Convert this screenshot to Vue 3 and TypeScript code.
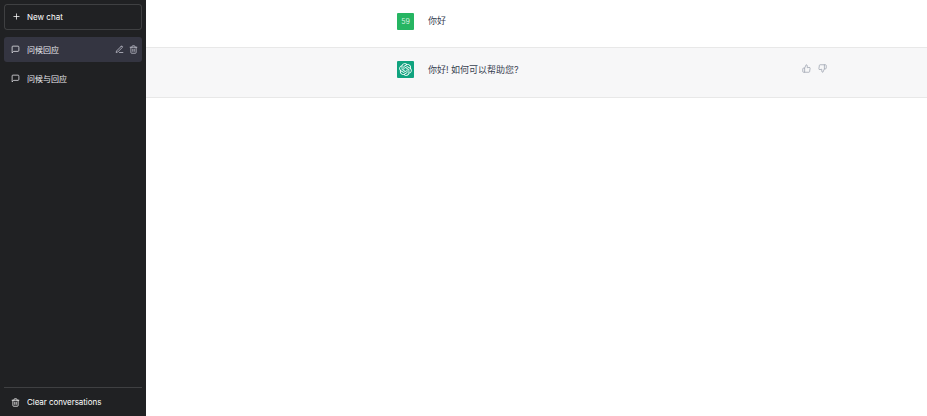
<script setup lang="ts">
const conversations = [
  { id: 1, title: '问候回应', active: true },
  { id: 2, title: '问候与回应', active: false },
];

const openaiPath =
  'M37.5324 16.8707C37.9808 15.5241 38.1363 14.0974 37.9886 12.6859C37.8409 11.2744 37.3934 9.91076 36.676 8.68622C35.6126 6.83404 33.9882 5.3676 32.0373 4.4985C30.0864 3.62941 27.9098 3.40259 25.8215 3.85078C24.8796 2.7893 23.7219 1.94125 22.4257 1.36341C21.1295 0.785575 19.7249 0.491269 18.3058 0.500197C16.1708 0.495044 14.0893 1.16803 12.3614 2.42214C10.6335 3.67624 9.34853 5.44666 8.6917 7.47815C7.30085 7.76286 5.98686 8.3414 4.8377 9.17505C3.68854 10.0087 2.73073 11.0782 2.02839 12.312C0.956464 14.1591 0.498905 16.2988 0.721698 18.4228C0.944492 20.5467 1.83612 22.5449 3.268 24.1293C2.81966 25.4759 2.66413 26.9026 2.81182 28.3141C2.95951 29.7256 3.40701 31.0892 4.12437 32.3138C5.18791 34.1659 6.8123 35.6322 8.76321 36.5013C10.7141 37.3704 12.8907 37.5973 14.9789 37.1492C15.9208 38.2107 17.0786 39.0587 18.3747 39.6366C19.6709 40.2144 21.0755 40.5087 22.4946 40.4998C24.6307 40.5054 26.7133 39.8321 28.4418 38.5772C30.1704 37.3223 31.4556 35.5506 32.1119 33.5179C33.5027 33.2332 34.8167 32.6547 35.9659 31.821C37.115 30.9874 38.0728 29.9178 38.7752 28.684C39.8458 26.8371 40.3023 24.6979 40.0789 22.5748C39.8556 20.4517 38.9639 18.4544 37.5324 16.8707ZM22.4978 37.8849C20.7443 37.8874 19.0459 37.2733 17.6994 36.1501C17.7601 36.117 17.8666 36.0586 17.936 36.0161L25.9004 31.4156C26.1003 31.3019 26.2663 31.137 26.3813 30.9378C26.4964 30.7386 26.5563 30.5124 26.5549 30.2825V19.0542L29.9213 20.998C29.9389 21.0068 29.9541 21.0198 29.9656 21.0359C29.977 21.052 29.9842 21.0707 29.9867 21.0902V30.3889C29.9842 32.375 29.1946 34.2791 27.7909 35.6841C26.3872 37.0892 24.4838 37.8806 22.4978 37.8849ZM6.39227 31.0064C5.51397 29.4888 5.19742 27.7107 5.49804 25.9832C5.55718 26.0187 5.66048 26.0818 5.73461 26.1244L13.699 30.7248C13.8975 30.8408 14.1233 30.902 14.3532 30.902C14.583 30.902 14.8088 30.8408 15.0073 30.7248L24.731 25.1103V28.9979C24.7321 29.0177 24.7283 29.0376 24.7199 29.0556C24.7115 29.0736 24.6988 29.0893 24.6829 29.1012L16.6317 33.7497C14.9096 34.7416 12.8643 35.0097 10.9447 34.4954C9.02506 33.9811 7.38785 32.7263 6.39227 31.0064ZM4.29707 13.6194C5.17156 12.0998 6.55279 10.9364 8.19885 10.3327C8.19885 10.4013 8.19491 10.5228 8.19491 10.6071V19.808C8.19351 20.0378 8.25334 20.2638 8.36823 20.4629C8.48312 20.6619 8.64893 20.8267 8.84863 20.9404L18.5723 26.5542L15.206 28.4979C15.1894 28.5089 15.1703 28.5155 15.1505 28.5173C15.1307 28.5191 15.1107 28.516 15.0924 28.5082L7.04046 23.8557C5.32135 22.8601 4.06716 21.2235 3.55289 19.3046C3.03862 17.3858 3.30624 15.3413 4.29707 13.6194ZM31.955 20.0556L22.2312 14.4411L25.5976 12.4981C25.6142 12.4872 25.6333 12.4805 25.6531 12.4787C25.6729 12.4769 25.6928 12.4801 25.7111 12.4879L33.7631 17.1364C34.9967 17.849 36.0017 18.8982 36.6606 20.1613C37.3194 21.4244 37.6047 22.849 37.4832 24.2684C37.3617 25.6878 36.8382 27.0432 35.9743 28.1759C35.1103 29.3086 33.9415 30.1717 32.6047 30.6641C32.6047 30.5947 32.6047 30.4733 32.6047 30.3889V21.188C32.6066 20.9586 32.5474 20.7328 32.4332 20.5338C32.319 20.3348 32.154 20.1698 31.955 20.0556ZM35.3055 15.0128C35.2464 14.9765 35.1431 14.9142 35.069 14.8717L27.1045 10.2712C26.906 10.1554 26.6803 10.0943 26.4504 10.0943C26.2206 10.0943 25.9948 10.1554 25.7963 10.2712L16.0726 15.8858V11.9982C16.0715 11.9783 16.0753 11.9585 16.0837 11.9405C16.0921 11.9225 16.1048 11.9068 16.1207 11.8949L24.1719 7.25025C25.4053 6.53903 26.8158 6.19376 28.2383 6.25482C29.6608 6.31589 31.0364 6.78077 32.2044 7.59508C33.3723 8.40939 34.2842 9.53945 34.8334 10.8531C35.3826 12.1667 35.5464 13.6095 35.3055 15.0128ZM14.2424 21.9419L10.8752 19.9981C10.8576 19.9893 10.8423 19.9763 10.8309 19.9602C10.8195 19.9441 10.8122 19.9254 10.8098 19.9058V10.6071C10.8107 9.18295 11.2173 7.78848 11.9819 6.58696C12.7466 5.38544 13.8377 4.42659 15.1275 3.82264C16.4173 3.21869 17.8524 2.99464 19.2649 3.1767C20.6775 3.35876 22.0089 3.93941 23.1034 4.85067C23.0427 4.88379 22.937 4.94215 22.8668 4.98473L14.9024 9.58517C14.7025 9.69878 14.5366 9.86356 14.4215 10.0626C14.3065 10.2616 14.2466 10.4877 14.2479 10.7175L14.2424 21.9419ZM16.071 17.9991L20.4018 15.4978L24.7325 17.9975V22.9985L20.4018 25.4983L16.071 22.9985V17.9991Z';
</script>

<template>
  <div class="page">
    <aside class="sidebar">
      <button class="new-chat">
        <svg class="icon" viewBox="0 0 24 24">
          <line x1="12" y1="5" x2="12" y2="19" />
          <line x1="5" y1="12" x2="19" y2="12" />
        </svg>
        <span>New chat</span>
      </button>

      <nav class="conversations">
        <a
          v-for="conv in conversations"
          :key="conv.id"
          class="conversation"
          :class="{ active: conv.active }"
        >
          <svg class="icon" viewBox="0 0 24 24">
            <path d="M21 15a2 2 0 0 1-2 2H7l-4 4V5a2 2 0 0 1 2-2h14a2 2 0 0 1 2 2z" />
          </svg>
          <span class="conversation-title">{{ conv.title }}</span>
          <span v-if="conv.active" class="conversation-actions">
            <svg class="icon" viewBox="0 0 24 24">
              <path d="M12 20h9" />
              <path d="M16.5 3.5a2.121 2.121 0 0 1 3 3L7 19l-4 1 1-4L16.5 3.5z" />
            </svg>
            <svg class="icon" viewBox="0 0 24 24">
              <polyline points="3 6 5 6 21 6" />
              <path d="M19 6v14a2 2 0 0 1-2 2H7a2 2 0 0 1-2-2V6m3 0V4a2 2 0 0 1 2-2h4a2 2 0 0 1 2 2v2" />
              <line x1="10" y1="11" x2="10" y2="17" />
              <line x1="14" y1="11" x2="14" y2="17" />
            </svg>
          </span>
        </a>
      </nav>

      <div class="sidebar-footer">
        <a class="clear">
          <svg class="icon" viewBox="0 0 24 24">
            <polyline points="3 6 5 6 21 6" />
            <path d="M19 6v14a2 2 0 0 1-2 2H7a2 2 0 0 1-2-2V6m3 0V4a2 2 0 0 1 2-2h4a2 2 0 0 1 2 2v2" />
            <line x1="10" y1="11" x2="10" y2="17" />
            <line x1="14" y1="11" x2="14" y2="17" />
          </svg>
          <span>Clear conversations</span>
        </a>
      </div>
    </aside>

    <main class="thread">
      <section class="message user">
        <div class="message-inner">
          <div class="avatar avatar-user">59</div>
          <p class="message-text">你好</p>
        </div>
      </section>

      <section class="message assistant">
        <div class="message-inner">
          <div class="avatar avatar-bot">
            <svg viewBox="0 0 41 41" class="logo">
              <path :d="openaiPath" fill="currentColor" />
            </svg>
          </div>
          <p class="message-text">你好! 如何可以帮助您?</p>
          <div class="feedback">
            <svg class="icon" viewBox="0 0 24 24">
              <path d="M14 9V5a3 3 0 0 0-3-3l-4 9v11h11.28a2 2 0 0 0 2-1.7l1.38-9a2 2 0 0 0-2-2.3zM7 22H4a2 2 0 0 1-2-2v-7a2 2 0 0 1 2-2h3" />
            </svg>
            <svg class="icon" viewBox="0 0 24 24">
              <path d="M10 15v4a3 3 0 0 0 3 3l4-9V2H5.72a2 2 0 0 0-2 1.7l-1.38 9a2 2 0 0 0 2 2.3zm7-13h2.67A2.31 2.31 0 0 1 22 4v7a2.31 2.31 0 0 1-2.33 2H17" />
            </svg>
          </div>
        </div>
      </section>
    </main>
  </div>
</template>

<style scoped>
.page {
  display: flex;
  height: 416px;
  overflow: hidden;
  font-family: "Inter", "Noto Sans CJK SC", sans-serif;
  background: #fff;
}

.icon {
  width: 9px;
  height: 9px;
  flex: none;
  fill: none;
  stroke: currentColor;
  stroke-width: 2;
  stroke-linecap: round;
  stroke-linejoin: round;
}

.sidebar {
  width: 146px;
  flex: none;
  display: flex;
  flex-direction: column;
  padding: 4px 4px 0;
  box-sizing: border-box;
  background: #202123;
  color: #fff;
  font-size: 8px;
}

.new-chat {
  display: flex;
  align-items: center;
  gap: 6px;
  height: 26px;
  padding: 0 7px 1px;
  border: 1px solid rgba(255, 255, 255, 0.14);
  border-radius: 3px;
  background: transparent;
  color: #fff;
  font: inherit;
  margin-bottom: 7px;
}

.conversations {
  flex: 1;
  display: flex;
  flex-direction: column;
  gap: 4px;
}

.conversation {
  display: flex;
  align-items: center;
  gap: 7px;
  height: 25px;
  padding: 0 4px 0 7px;
  border-radius: 3px;
  color: #ececf1;
}

.conversation.active {
  background: #343541;
}

.conversation-title {
  flex: 1;
}

.conversation-actions {
  display: flex;
  gap: 5px;
  color: #c5c5d2;
}

.sidebar-footer {
  border-top: 1px solid rgba(255, 255, 255, 0.14);
  padding: 5px 0;
}

.clear {
  display: flex;
  align-items: center;
  gap: 7px;
  height: 18px;
  padding: 0 7px;
  letter-spacing: -0.05px;
}

.thread {
  flex: 1;
  min-width: 0;
  color: #374151;
  font-size: 9px;
}

.message {
  border-bottom: 1px solid #e8e8e8;
  padding-left: 251px;
}

.message.user {
  height: 48px;
  box-sizing: border-box;
  padding-top: 13px;
}

.message.assistant {
  height: 50px;
  box-sizing: border-box;
  padding-top: 13px;
  background: #f7f7f8;
}

.message-inner {
  display: flex;
  align-items: flex-start;
  width: 430px;
}

.avatar {
  width: 17px;
  height: 17px;
  flex: none;
  display: flex;
  align-items: center;
  justify-content: center;
  border-radius: 1px;
  color: #fff;
}

.avatar-user {
  background: #26b562;
  font-size: 7px;
  color: #d5f2e0;
}

.avatar-bot {
  background: #10a37f;
}

.logo {
  width: 13px;
  height: 13px;
}

.message-text {
  flex: 1;
  margin: 1px 0 0 14px;
  line-height: 13px;
}

.assistant .message-text {
  margin-top: 2px;
}

.feedback {
  display: flex;
  gap: 7px;
  margin-top: 3px;
  color: #9ca3af;
}
</style>

<style>
html, body {
  margin: 0;
  background: #fff;
}
</style>
